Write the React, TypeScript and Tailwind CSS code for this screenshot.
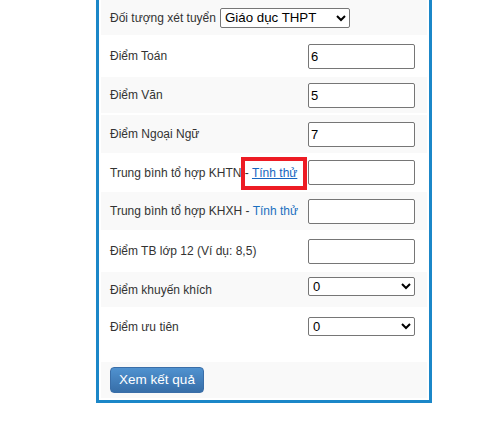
const rows = [
  { label: "Điểm Toán", value: "6", h: "h-[42px]", bg: "bg-white" },
  { label: "Điểm Văn", value: "5", h: "h-[36px]", bg: "bg-[#f9f9f9]" },
];

function ScoreInput({ value }: { value?: string }) {
  return (
    <input
      type="text"
      defaultValue={value}
      className="w-[107px] h-[25px] border border-[#767676] rounded-[2px] bg-white px-[2px] text-[13px] text-black outline-none"
    />
  );
}

function ScoreSelect() {
  return (
    <select className="w-[107px] h-[19px] border border-[#767676] rounded-[2px] bg-white text-[13px] text-black">
      <option>0</option>
      <option>0,5</option>
      <option>1</option>
    </select>
  );
}

export default function App() {
  return (
    <div className="w-[480px] h-[428px] bg-white font-['Liberation_Sans',Arial,sans-serif] text-[12px] text-[#333]">
      <div className="ml-[96px] w-[336px] border-x-[3px] border-b-[3px] border-[#1b87c8] px-[2px] pb-[2px] bg-white">
        <div className="h-[35px] bg-[#f9f9f9] flex items-center pl-[9px]">
          <span>Đối tượng xét tuyển</span>
          <select className="ml-[4px] w-[130px] h-[20px] border border-[#767676] rounded-[2px] bg-white text-[13.3px] text-black">
            <option>Giáo dục THPT</option>
            <option>Giáo dục thường xuyên</option>
          </select>
        </div>

        {rows.map((row) => (
          <div
            key={row.label}
            className={`${row.h} ${row.bg} flex items-center justify-between pl-[9px] pr-[12px]`}
          >
            <span>{row.label}</span>
            <ScoreInput value={row.value} />
          </div>
        ))}

        <div className="h-[2px] bg-white" />

        <div className="h-[38px] bg-[#f9f9f9] flex items-center justify-between pl-[9px] pr-[12px]">
          <span>Điểm Ngoại Ngữ</span>
          <ScoreInput value="7" />
        </div>

        <div className="relative h-[39px] bg-white flex items-center justify-between pl-[9px] pr-[12px]">
          <span>
            Trung bình tổ hợp KHTN -{" "}
            <a href="#" className="text-[#1565c0] underline">
              Tính thử
            </a>
          </span>
          <ScoreInput />
          <div className="absolute left-[140px] top-[4px] w-[66px] h-[33px] border-4 border-[#ed1c24]" />
        </div>

        <div className="h-[38px] bg-[#f9f9f9] flex items-center justify-between pl-[9px] pr-[12px]">
          <span>
            Trung bình tổ hợp KHXH -{" "}
            <a href="#" className="text-[#1a6fc0]">
              Tính thử
            </a>
          </span>
          <ScoreInput />
        </div>

        <div className="h-[42px] bg-white flex items-center justify-between pl-[9px] pr-[12px]">
          <span>Điểm TB lớp 12 (Ví dụ: 8,5)</span>
          <ScoreInput />
        </div>

        <div className="h-[35px] bg-[#f9f9f9] flex items-center justify-between pl-[9px] pr-[12px]">
          <span>Điểm khuyến khích</span>
          <div className="self-start mt-[5px]">
            <ScoreSelect />
          </div>
        </div>

        <div className="h-[55px] bg-white flex items-start justify-between pl-[9px] pr-[12px]">
          <span className="mt-[13px] leading-[14px]">Điểm ưu tiên</span>
          <div className="mt-[10px]">
            <ScoreSelect />
          </div>
        </div>

        <div className="h-[36px] bg-[#f9f9f9] flex items-center pl-[9px]">
          <button className="w-[94px] h-[26px] rounded-[4px] border border-[#3a6ea8] bg-linear-to-b from-[#5092d0] to-[#376ea8] text-white text-[13.5px]">
            Xem kết quả
          </button>
        </div>
      </div>
    </div>
  );
}
